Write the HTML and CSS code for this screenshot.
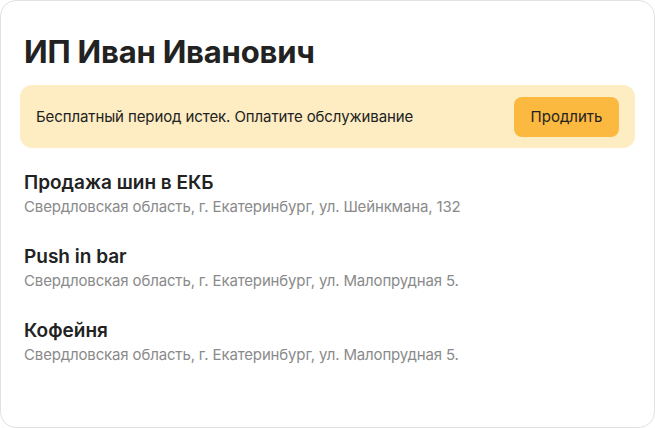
FILE: index.html
```html
<!DOCTYPE html>
<html lang="ru">
<head>
  <meta charset="UTF-8" />
  <meta name="viewport" content="width=device-width, initial-scale=1.0"/>
  <title>ИП Иван Иванович</title>
  <link rel="stylesheet" href="styles.css">
</head>
<body>
  <div class="card">
    <h1 class="card-title">ИП Иван Иванович</h1>

    <!-- Trial expired banner -->
    <div class="banner">
      <span class="banner-text">Бесплатный период истек. Оплатите обслуживание</span>
      <button class="banner-button">Продлить</button>
    </div>

    <!-- Points of sale -->
    <div class="places">
      <div class="place">
        <div class="place-name">Продажа шин в ЕКБ</div>
        <div class="place-address">Свердловская область, г. Екатеринбург, ул. Шейнкмана, 132</div>
      </div>
      <div class="place">
        <div class="place-name">Push in bar</div>
        <div class="place-address">Свердловская область, г. Екатеринбург, ул. Малопрудная 5.</div>
      </div>
      <div class="place">
        <div class="place-name">Кофейня</div>
        <div class="place-address">Свердловская область, г. Екатеринбург, ул. Малопрудная 5.</div>
      </div>
    </div>
  </div>
</body>
</html>
```

FILE: styles.css
```css
body {
  margin: 0;
  background-color: #ffffff;
  font-family: Inter, "Noto Sans", sans-serif;
  color: #222222;
}

.card {
  box-sizing: border-box;
  width: 655px;
  height: 428px;
  border: 1px solid #e2e2e2;
  border-radius: 16px;
  padding: 30px 19px 0 19px;
}

.card-title {
  margin: 0 0 0 4px;
  font-size: 31px;
  font-weight: 700;
  line-height: 42px;
  letter-spacing: -0.2px;
}

.banner {
  display: flex;
  align-items: center;
  justify-content: space-between;
  margin-top: 12px;
  height: 63px;
  padding: 0 16px;
  background-color: #feedc2;
  border-radius: 12px;
}

.banner-text {
  font-size: 15px;
  letter-spacing: -0.1px;
}

.banner-button {
  background-color: #fcb940;
  color: #222222;
  border: none;
  border-radius: 8px;
  width: 105px;
  height: 40px;
  font-family: inherit;
  font-size: 15px;
  cursor: pointer;
}

.places {
  display: flex;
  flex-direction: column;
  gap: 26px;
  margin-top: 22px;
  padding-left: 4px;
}

.place-name {
  font-size: 19px;
  font-weight: 600;
  line-height: 25px;
}

.place-address {
  font-size: 15px;
  color: #8a8a8a;
  line-height: 23px;
  letter-spacing: -0.15px;
}
```
